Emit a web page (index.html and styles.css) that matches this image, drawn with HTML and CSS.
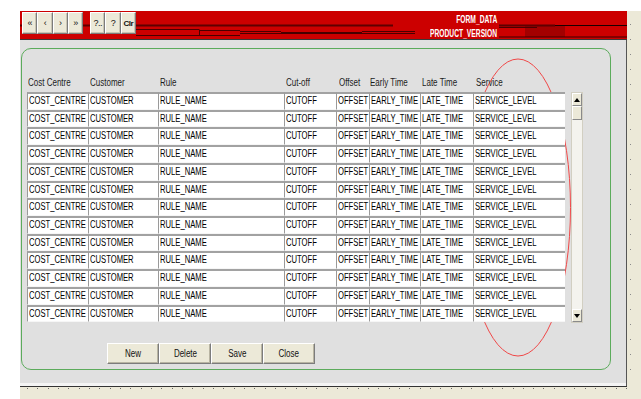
FILE: index.html
```html
<!DOCTYPE html>
<html>
<head>
<meta charset="utf-8">
<link rel="stylesheet" href="styles.css">
</head>
<body>
<div class="frame">
  <div class="upper">
    <div class="main">
      <div class="band">
        <svg class="band-deco" width="607" height="28" viewBox="0 0 607 28">
          <line x1="0" y1="14.5" x2="373" y2="14.5" stroke="#5e0000" stroke-width="2"/>
          <line x1="116" y1="18.5" x2="179" y2="18.5" stroke="#4a0000"/>
          <line x1="116" y1="24.5" x2="179" y2="24.5" stroke="#4a0000"/>
          <line x1="179.5" y1="18.5" x2="179.5" y2="24.5" stroke="#4a0000"/>
          <line x1="179" y1="19.5" x2="220" y2="19.5" stroke="#4a0000"/>
          <line x1="179" y1="24.5" x2="220" y2="24.5" stroke="#4a0000"/>
          <line x1="220" y1="20.5" x2="261" y2="20.5" stroke="#4a0000"/>
          <line x1="220" y1="22.5" x2="261" y2="22.5" stroke="#4a0000"/>
          <line x1="261" y1="22" x2="342" y2="22" stroke="#1a0000" stroke-width="1.5"/>
          <line x1="342" y1="20.5" x2="395" y2="20.5" stroke="#4a0000"/>
          <line x1="342" y1="22.5" x2="395" y2="22.5" stroke="#4a0000"/>
          <rect x="505" y="15" width="40" height="11" fill="#a30000"/>
          <line x1="479" y1="14.5" x2="535" y2="14.5" stroke="#5e0000" stroke-width="2"/>
          <line x1="535" y1="14.5" x2="607" y2="14.5" stroke="#1a0000"/>
          <line x1="479" y1="16.5" x2="517" y2="16.5" stroke="#4a0000"/>
          <line x1="479" y1="26" x2="607" y2="26" stroke="#3a0000"/>
        </svg>
        <div class="nav">
          <div class="group">
            <div class="tb">«</div>
            <div class="tb">‹</div>
            <div class="tb">›</div>
            <div class="tb">»</div>
          </div>
          <div class="group">
            <div class="tb">?..</div>
            <div class="tb">?</div>
            <div class="tb tb-bold">Clr</div>
          </div>
        </div>
        <div class="title">
          <div><span>FORM_DATA</span></div>
          <div><span>PRODUCT_VERSION</span></div>
        </div>
      </div>
      <div class="content">
        <div class="panel">
          <svg class="mark" width="588" height="320" viewBox="0 0 588 320">
            <ellipse cx="496" cy="158.5" rx="52.5" ry="148.5" fill="none" stroke="#f04848" stroke-width="1"/>
          </svg>
          <div class="grid-wrap">
            <div class="head">
              <div class="hc"><span class="t">Cost Centre</span></div>
              <div class="hc"><span class="t">Customer</span></div>
              <div class="hc"><span class="t">Rule</span></div>
              <div class="hc"><span class="t">Cut-off</span></div>
              <div class="hc hc-wide"><span class="t">Offset</span></div>
              <div class="hc hc-tight"><span class="t">Early Time</span></div>
              <div class="hc"><span class="t">Late Time</span></div>
              <div class="hc hc-wide"><span class="t">Service</span></div>
            </div>
            <div class="rows" id="rows"></div>
            <div class="scroll">
              <div class="sb"><i class="up"></i></div>
              <div class="thumb"></div>
              <div class="track"></div>
              <div class="sb"><i class="down"></i></div>
            </div>
          </div>
          <div class="actions">
            <div class="btn"><span class="t">New</span></div>
            <div class="btn"><span class="t">Delete</span></div>
            <div class="btn"><span class="t">Save</span></div>
            <div class="btn"><span class="t">Close</span></div>
          </div>
        </div>
      </div>
      <div class="light"></div>
    </div>
    <div class="rstrip"></div>
  </div>
  <div class="bottom"></div>
</div>
<script>
  var vals = ["COST_CENTRE","CUSTOMER","RULE_NAME","CUTOFF","OFFSET","EARLY_TIME","LATE_TIME","SERVICE_LEVEL"];
  var rows = document.getElementById("rows");
  var html = "";
  for (var r = 0; r < 13; r++) {
    for (var c = 0; c < vals.length; c++) {
      html += '<div class="cell"><span class="ct">' + vals[c] + '</span></div>';
    }
  }
  rows.innerHTML = html;
</script>
</body>
</html>
```

FILE: styles.css
```css
html, body {
  margin: 0;
  padding: 0;
  background: #ffffff;
  font-family: "Liberation Sans", Arial, sans-serif;
}

.frame {
  margin: 11px 0 0 20px;
  height: 388px;
  background: #ece9d8;
  overflow: hidden;
}

.upper {
  display: flex;
}

.main {
  width: 607px;
  flex: none;
}

.band {
  position: relative;
  height: 29px;
  box-sizing: border-box;
  background: #cc0000;
  border-bottom: 1px solid #3a3a3a;
  padding: 1px 0 0 2px;
  display: flex;
  align-items: flex-start;
}

.band-deco {
  position: absolute;
  left: 0;
  top: 0;
}

.nav {
  position: relative;
  display: flex;
  gap: 6.8px;
}

.group {
  display: flex;
}

.tb {
  width: 15.3px;
  height: 22px;
  box-sizing: border-box;
  background: #ece9d8;
  border: 1px solid;
  border-color: #ffffff #7c7c7c #7c7c7c #ffffff;
  box-shadow: inset -1px -1px 0 #c9c5b3;
  display: flex;
  align-items: center;
  justify-content: center;
  font-size: 9px;
  color: #111;
  letter-spacing: -0.5px;
}

.tb-bold {
  font-weight: bold;
  font-size: 8px;
}

.title {
  position: relative;
  margin: 0.7px 130px 0 auto;
  color: #ffffff;
  font-weight: bold;
  font-size: 10px;
  line-height: 14px;
  text-align: right;
}

.title span {
  display: inline-block;
  transform: scaleX(0.67);
  transform-origin: 100% 50%;
}

.content {
  height: 343px;
  box-sizing: border-box;
  background: #e0e0e0;
  border-right: 1px solid #555555;
  padding: 8px 0 0 1px;
}

.light {
  height: 3px;
  background: #f4f4f4;
  border-right: 1px solid #555555;
}

.rstrip {
  flex: 1;
  background-image: repeating-linear-gradient(to bottom, #8a8a8a 0 1px, transparent 1px 15px);
  background-size: 1px 360px;
  background-repeat: no-repeat;
  background-position: 3px 13px;
}

.bottom {
  width: 607px;
  height: 12px;
  border-top: 1px solid #333333;
  background-image: repeating-linear-gradient(to right, #6a6a6a 0 1px, transparent 1px 10.33px);
  background-size: 600px 1px;
  background-repeat: no-repeat;
  background-position: 7px 1px;
}

.panel {
  position: relative;
  width: 590px;
  height: 322px;
  box-sizing: border-box;
  border: 1px solid #5cab5c;
  border-radius: 10px;
  padding: 27px 0 0 5px;
}

.mark {
  position: absolute;
  left: 0;
  top: 0;
}

.grid-wrap {
  position: relative;
  z-index: 1;
  display: grid;
  grid-template-columns: 538px 12px;
  column-gap: 6px;
}

.head,
.rows {
  display: grid;
  grid-template-columns: 61px 70px 126px 52px 33px 51px 53px 92px;
}

.head {
  grid-column: 1;
  grid-row: 1;
  height: 14px;
  margin-bottom: 2px;
  font-size: 10px;
  line-height: 14px;
  color: #1c1c1c;
}

.hc {
  padding-left: 2px;
  white-space: nowrap;
}

.hc:first-child {
  padding-left: 1px;
}

.hc-wide {
  padding-left: 3px;
}

.hc-tight {
  padding-left: 1px;
}

.t {
  display: inline-block;
  transform: scaleX(0.8);
  transform-origin: 0 50%;
}

.ct {
  display: inline-block;
  transform: scaleX(0.765);
  transform-origin: 0 50%;
}

.rows {
  grid-column: 1;
  grid-row: 2;
  grid-auto-rows: 17.72px;
}

.cell {
  background: #ffffff;
  box-sizing: border-box;
  border-top: 2px solid #a2a2a2;
  border-left: 1px solid #9a9a9a;
  border-bottom: 1px solid #f6f6f6;
  padding: 0 0 1px 1px;
  font-size: 10px;
  line-height: 14.2px;
  color: #000;
  overflow: hidden;
  white-space: nowrap;
}

.scroll {
  grid-column: 2;
  grid-row: 2;
  height: 231px;
  box-sizing: border-box;
  display: flex;
  flex-direction: column;
  background: #f4f3ee;
  border: 1px solid #d2cfc2;
}

.sb,
.thumb {
  background: #ece9d8;
  box-sizing: border-box;
  border: 1px solid;
  border-color: #ffffff #8a8a8a #8a8a8a #ffffff;
}

.sb {
  height: 13px;
  display: flex;
  align-items: center;
  justify-content: center;
}

.thumb {
  height: 14px;
}

.track {
  flex: 1;
}

.up,
.down {
  width: 0;
  height: 0;
  border-left: 3px solid transparent;
  border-right: 3px solid transparent;
}

.up {
  border-bottom: 4px solid #000;
}

.down {
  border-top: 4px solid #000;
}

.actions {
  display: flex;
  margin: 19.6px 0 0 80px;
}

.btn {
  width: 52px;
  height: 21px;
  box-sizing: border-box;
  background: #ece9d8;
  border: 1px solid;
  border-color: #ffffff #7c7c7c #7c7c7c #ffffff;
  box-shadow: inset -1px -1px 0 #b8b4a2;
  font-size: 10px;
  line-height: 19px;
  color: #111;
  text-align: center;
}

.btn .t {
  transform-origin: 50% 50%;
}
```
